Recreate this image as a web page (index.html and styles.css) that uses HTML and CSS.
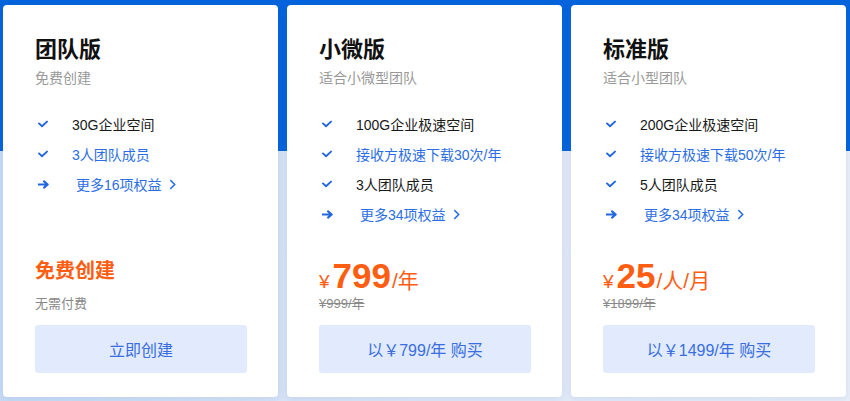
FILE: index.html
```html
<!DOCTYPE html>
<html lang="zh-CN">
<head>
<meta charset="utf-8">
<title>版本选择</title>
<link rel="stylesheet" href="styles.css">
</head>
<body>
<div class="page">
  <div class="card">
    <h2 class="title">团队版</h2>
    <p class="sub">免费创建</p>
    <ul class="features">
      <li><svg class="ic" viewBox="0 0 10 8"><path d="M1 3.4 L4 6.2 L9 1.6" /></svg><span>30G企业空间</span></li>
      <li class="blue"><svg class="ic" viewBox="0 0 10 8"><path d="M1 3.4 L4 6.2 L9 1.6" /></svg><span>3人团队成员</span></li>
      <li class="more"><svg class="ic arrow" viewBox="0 0 10 8"><path d="M0.5 4 H8.5 M5.5 1.2 L8.8 4 L5.5 6.8" /></svg><span>更多16项权益</span><svg class="chev" viewBox="0 0 6 10"><path d="M1 1 L5 5 L1 9" /></svg></li>
    </ul>
    <div class="price-block">
      <div class="free">免费创建</div>
      <div class="note">无需付费</div>
      <button class="btn">立即创建</button>
    </div>
  </div>

  <div class="card">
    <h2 class="title">小微版</h2>
    <p class="sub">适合小微型团队</p>
    <ul class="features">
      <li><svg class="ic" viewBox="0 0 10 8"><path d="M1 3.4 L4 6.2 L9 1.6" /></svg><span>100G企业极速空间</span></li>
      <li class="blue"><svg class="ic" viewBox="0 0 10 8"><path d="M1 3.4 L4 6.2 L9 1.6" /></svg><span>接收方极速下载30次/年</span></li>
      <li><svg class="ic" viewBox="0 0 10 8"><path d="M1 3.4 L4 6.2 L9 1.6" /></svg><span>3人团队成员</span></li>
      <li class="more"><svg class="ic arrow" viewBox="0 0 10 8"><path d="M0.5 4 H8.5 M5.5 1.2 L8.8 4 L5.5 6.8" /></svg><span>更多34项权益</span><svg class="chev" viewBox="0 0 6 10"><path d="M1 1 L5 5 L1 9" /></svg></li>
    </ul>
    <div class="price-block">
      <div class="price"><span class="yen">¥</span><span class="num">799</span><span class="unit">/年</span></div>
      <div class="note strike">¥999/年</div>
      <button class="btn">以￥799/年 购买</button>
    </div>
  </div>

  <div class="card">
    <h2 class="title">标准版</h2>
    <p class="sub">适合小型团队</p>
    <ul class="features">
      <li><svg class="ic" viewBox="0 0 10 8"><path d="M1 3.4 L4 6.2 L9 1.6" /></svg><span>200G企业极速空间</span></li>
      <li class="blue"><svg class="ic" viewBox="0 0 10 8"><path d="M1 3.4 L4 6.2 L9 1.6" /></svg><span>接收方极速下载50次/年</span></li>
      <li><svg class="ic" viewBox="0 0 10 8"><path d="M1 3.4 L4 6.2 L9 1.6" /></svg><span>5人团队成员</span></li>
      <li class="more"><svg class="ic arrow" viewBox="0 0 10 8"><path d="M0.5 4 H8.5 M5.5 1.2 L8.8 4 L5.5 6.8" /></svg><span>更多34项权益</span><svg class="chev" viewBox="0 0 6 10"><path d="M1 1 L5 5 L1 9" /></svg></li>
    </ul>
    <div class="price-block">
      <div class="price"><span class="yen">¥</span><span class="num">25</span><span class="unit">/人/月</span></div>
      <div class="note strike">¥1899/年</div>
      <button class="btn">以￥1499/年 购买</button>
    </div>
  </div>
</div>
</body>
</html>
```

FILE: styles.css
```css
* { box-sizing: border-box; }
html, body { margin: 0; padding: 0; }
body {
  width: 850px;
  height: 401px;
  overflow: hidden;
  font-family: "Liberation Sans", "Noto Sans CJK SC", sans-serif;
  background:
    linear-gradient(#0564dc, #0564dc) top / 100% 151px no-repeat,
    linear-gradient(90deg, #c8dbf5 0%, #dfe8f7 50%, #e9eff9 100%);
}
.page {
  display: flex;
  gap: 9px;
  padding: 5px 3px 4px 3px;
  height: 401px;
}
.card {
  width: 275px;
  height: 392px;
  background: #fff;
  border-radius: 4px;
  box-shadow: 0 2px 8px rgba(40, 90, 170, 0.12);
  padding: 30px 31px 24px 32px;
  display: flex;
  flex-direction: column;
}
.title {
  margin: 0;
  font-size: 22px;
  line-height: 30px;
  font-weight: 700;
  color: #111;
}
.sub {
  margin: 3px 0 0;
  font-size: 14px;
  line-height: 20px;
  color: #999;
}
.features {
  list-style: none;
  margin: 21px 0 0;
  padding: 0;
}
.features li {
  display: flex;
  align-items: center;
  height: 30px;
  font-size: 14px;
  color: #1a1a1a;
}
.features li.blue { color: #2c6ee3; }
.features li.more { color: #2c6ee3; }
.features li.more span { margin-left: 4px; }
.ic {
  width: 10px;
  height: 8px;
  margin-left: 3px;
  margin-right: 24px;
  fill: none;
  stroke: #2266dd;
  stroke-width: 1.9;
  stroke-linecap: round;
  stroke-linejoin: round;
  flex: none;
}
.ic.arrow { width: 11px; height: 9px; margin-right: 23px; }
.chev {
  width: 7px;
  height: 11px;
  margin-left: 7px;
  fill: none;
  stroke: #2c6ee3;
  stroke-width: 1.4;
}
.price-block {
  margin-top: auto;
  display: flex;
  flex-direction: column;
}
.free {
  font-size: 20px;
  line-height: 28px;
  font-weight: 700;
  color: #ff5d12;
  margin-bottom: 10px;
}
.price {
  color: #ff5d12;
  line-height: 38px;
  height: 38px;
  white-space: nowrap;
}
.price .yen { font-size: 19px; margin-right: 3px; }
.price .num { font-size: 35px; font-weight: 700; }
.price .unit { font-size: 21px; margin-left: 1px; }
.note {
  font-size: 13px;
  line-height: 18px;
  color: #888;
  margin-bottom: 12px;
}
.strike { text-decoration: line-through; color: #8a8a8a; }
.btn {
  width: 212px;
  height: 48px;
  border: none;
  border-radius: 3px;
  background: #e1ebfd;
  color: #3a6ee0;
  font-family: inherit;
  font-size: 16px;
  padding: 0;
  cursor: pointer;
}
```
